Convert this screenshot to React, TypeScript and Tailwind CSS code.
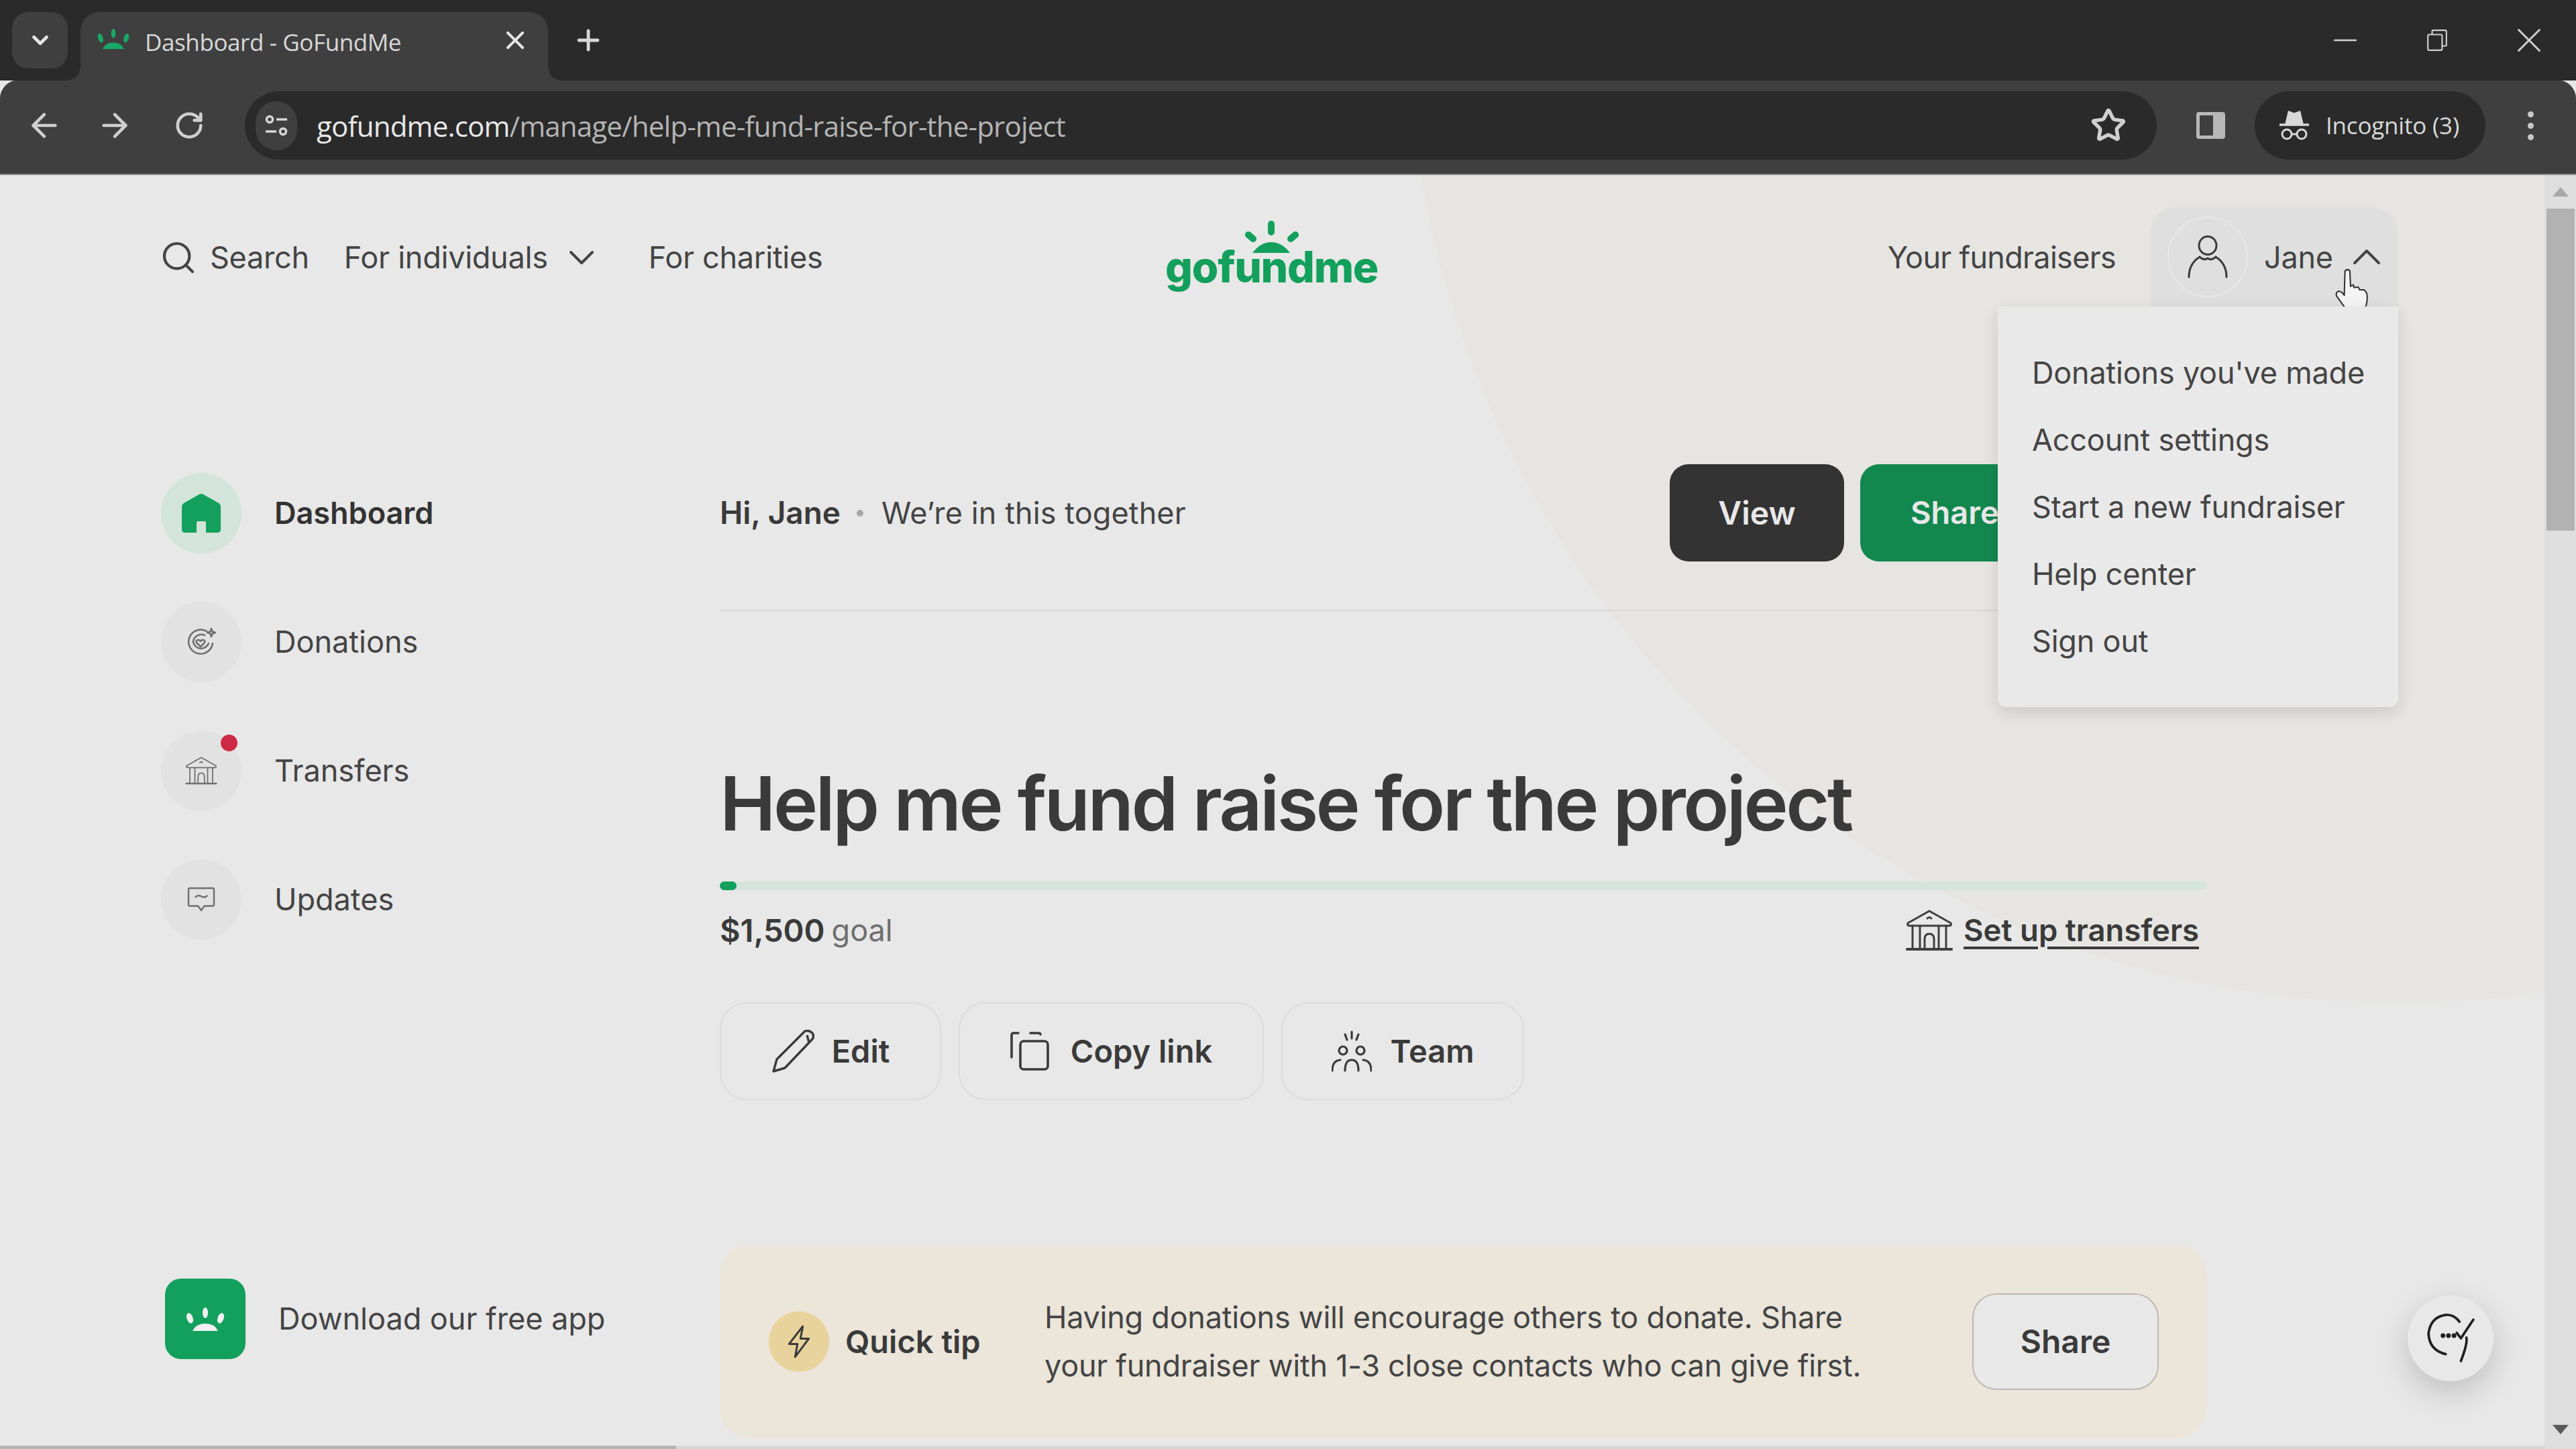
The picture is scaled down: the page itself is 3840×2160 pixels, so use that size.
import React from "react";
import { ChevronDown, ChevronUp, X, Plus, ArrowLeft, ArrowRight, RotateCw, Star, Minus, Search } from "lucide-react";

function Sun({ color, className }: { color: string; className?: string }) {
  return (
    <svg viewBox="0 0 60 35" preserveAspectRatio="none" className={className} fill={color}>
      <ellipse cx="30" cy="8" rx="4" ry="8" />
      <ellipse cx="7" cy="16" rx="4.5" ry="8" transform="rotate(-20 7 16)" />
      <ellipse cx="53" cy="16" rx="4.5" ry="8" transform="rotate(20 53 16)" />
      <path d="M11 35 Q16 24 30 24 Q44 24 49 35 Z" />
    </svg>
  );
}

function Bank({ className, stroke = 2 }: { className?: string; stroke?: number }) {
  return (
    <svg viewBox="0 0 70 62" className={className} fill="none" stroke="currentColor" strokeWidth={stroke} strokeLinecap="round" strokeLinejoin="round">
      <path d="M35 2 L67 20 Q69 23 65 24 L5 24 Q1 23 3 20 Z" />
      <path d="M32 13 Q35 10 38 13" />
      <path d="M10 24 V57 M21 24 V57 M49 24 V57 M60 24 V57" />
      <path d="M28 57 V44 Q28 36 35 36 Q42 36 42 44 V57" />
      <path d="M2 59 H68" strokeWidth={stroke * 1.4} />
    </svg>
  );
}

function NavIcon({ kind }: { kind: string }) {
  if (kind === "home")
    return (
      <svg viewBox="0 0 60 60" className="w-[60px] h-[60px]" fill="#12a05c">
        <path d="M30 1 Q32 1 34 2.5 L56 15 Q59 17 59 21 V54 Q59 59 54 59 H37 V44 Q37 42 35 42 H25 Q23 42 23 44 V59 H6 Q1 59 1 54 V21 Q1 17 4 15 L26 2.5 Q28 1 30 1 Z" />
      </svg>
    );
  if (kind === "target")
    return (
      <svg viewBox="0 0 44 44" className="w-[44px] h-[44px]" fill="none" stroke="#707070" strokeWidth="2.6" strokeLinecap="round" strokeLinejoin="round">
        <path d="M30 6 A18 18 0 1 0 39 24" />
        <path d="M10 22 A12 12 0 0 0 33 24" />
        <path d="M10 22 A12 12 0 0 1 27 12" />
        <path d="M21 29 L15 23 Q13.5 19.5 17 19 Q19.5 18.5 21 21 Q22.5 18.5 25 19 Q28.5 19.5 27 23 Z" />
        <path d="M37 2 L38.5 6.5 L43 8 L38.5 9.5 L37 14 L35.5 9.5 L31 8 L35.5 6.5 Z" />
      </svg>
    );
  if (kind === "bank")
    return <Bank className="w-[48px] h-[42px] text-[#707070]" stroke={2.6} />;
  return (
    <svg viewBox="0 0 44 40" className="w-[42px] h-[38px]" fill="none" stroke="#707070" strokeWidth="2.6" strokeLinecap="round" strokeLinejoin="round">
      <path d="M4 2 H40 Q42 2 42 4 V28 Q42 30 40 30 H27 L22 37 L17 30 H4 Q2 30 2 28 V4 Q2 2 4 2 Z" />
      <path d="M13 16 Q17 12 22 15 Q27 18 31 14" />
    </svg>
  );
}

function NavItem({ icon, label, active, dot }: { icon: string; label: string; active?: boolean; dot?: boolean }) {
  return (
    <div className="flex items-center h-[120px]">
      <div className={`relative flex items-center justify-center w-[120px] h-[120px] rounded-full ${active ? "bg-[#d3e4db]" : "bg-[#e2e2e2]"}`}>
        <NavIcon kind={icon} />
        {dot && <div className="absolute top-[6px] right-[6px] w-[25px] h-[25px] rounded-full bg-[#cc2a45]" />}
      </div>
      <span className={`ml-[49px] text-[45px] ${active ? "font-semibold text-[#333333]" : "text-[#444444]"}`}>{label}</span>
    </div>
  );
}

function OutlineBtn({ children, w }: { children: React.ReactNode; w: string }) {
  return (
    <div className={`flex items-center justify-center h-[146px] rounded-[40px] border-2 border-[#dcdcdc] text-[47px] font-semibold text-[#3a3a3a] ${w}`}>
      {children}
    </div>
  );
}

export default function App() {
  return (
    <div className="flex flex-col w-[3840px] h-[2160px] overflow-hidden bg-[#e8e8e8] font-['Inter',sans-serif] text-[#333333]">
      {/* tab strip */}
      <div className="relative flex items-start h-[120px] pt-[18px] pl-[18px] bg-[#2a2a2a] font-['Open_Sans',sans-serif]">
        <div className="flex items-center justify-center w-[83px] h-[84px] rounded-[24px] bg-[#3f3f3f] text-[#e4e4e4]">
          <ChevronDown size={38} strokeWidth={3} />
        </div>
        <div className="relative flex items-start ml-[19px] pt-[23px] w-[697px] h-[102px] rounded-t-[28px] bg-[#3f3f3f]">
          <Sun color="#1aa866" className="ml-[24px] mt-[2px] w-[50px] h-[30px]" />
          <span className="ml-[22px] text-[35px] leading-[44px] tracking-[-0.4px] text-[#d8d8d8]">Dashboard - GoFundMe</span>
          <X size={44} strokeWidth={2.2} className="absolute left-[626px] top-[20px] text-[#e6e6e6]" />
          <svg viewBox="0 0 24 24" className="absolute left-[-24px] bottom-0 w-[24px] h-[24px]" fill="#3f3f3f"><path d="M24 0 V24 H0 Q24 24 24 0 Z" /></svg>
          <svg viewBox="0 0 24 24" className="absolute right-[-24px] bottom-0 w-[24px] h-[24px]" fill="#3f3f3f"><path d="M0 0 V24 H24 Q0 24 0 0 Z" /></svg>
        </div>
        <Plus size={48} strokeWidth={2.4} className="ml-[36px] mt-[18px] text-[#d8d8d8]" />
        <div className="ml-auto flex items-center h-[84px] pr-[2px] text-[#d0d0d0]">
          <div className="flex items-center justify-center w-[137px]"><Minus size={54} strokeWidth={1.2} /></div>
          <div className="flex items-center justify-center w-[137px]">
            <svg viewBox="0 0 32 32" className="w-[34px] h-[34px]" fill="none" stroke="currentColor" strokeWidth="2"><rect x="3" y="8" width="20" height="22" rx="2" /><path d="M9 8 V3 Q9 2 10 2 H27 Q29 2 29 4 V23 Q29 24 28 24 H23" /></svg>
          </div>
          <div className="flex items-center justify-center w-[137px]"><X size={62} strokeWidth={1.1} /></div>
        </div>
      </div>

      {/* toolbar */}
      <div className="flex items-center h-[142px] pb-[4px] rounded-t-[28px] border-b-2 border-[#8a8a8a] bg-[#3f3f3f] -mt-px font-['Open_Sans',sans-serif]">
        <ArrowLeft size={56} strokeWidth={2} className="ml-[38px] text-[#cfcfcf]" />
        <ArrowRight size={56} strokeWidth={2} className="ml-[49px] text-[#cfcfcf]" />
        <RotateCw size={46} strokeWidth={2.4} className="ml-[60px] text-[#cfcfcf]" />
        <div className="flex items-center ml-[60px] w-[2850px] h-[102px] rounded-full bg-[#2a2a2a]">
          <div className="flex items-center justify-center ml-[16px] w-[62px] h-[73px] rounded-full bg-[#3f3f3f]">
            <svg viewBox="0 0 36 34" className="w-[36px] h-[34px]" fill="none" stroke="#d8d8d8" strokeWidth="3.4"><circle cx="8" cy="8" r="4.5" /><path d="M18 8 H34 M2 26 H18" /><circle cx="28" cy="26" r="4.5" /></svg>
          </div>
          <span className="ml-[29px] text-[42px] tracking-[-0.8px] text-[#e8e8e8]">gofundme.com<span className="text-[#b4b4b4]">/manage/help-me-fund-raise-for-the-project</span></span>
          <Star size={54} strokeWidth={2.4} className="ml-auto mr-[45px] text-[#cfcfcf]" />
        </div>
        <svg viewBox="0 0 45 42" className="ml-[58px] w-[45px] h-[42px]"><rect x="1" y="1" width="43" height="40" rx="4" fill="#b8b8b8" /><rect x="6" y="6" width="20" height="30" fill="#3f3f3f" /></svg>
        <div className="flex items-center ml-[43px] w-[344px] h-[102px] rounded-full bg-[#2a2a2a]">
          <svg viewBox="0 0 46 46" className="ml-[36px] w-[46px] h-[46px]" fill="none" stroke="#d8d8d8" strokeWidth="3"><path d="M15 3 L23 6 L31 3 L35 20 H11 Z" fill="#d8d8d8" /><path d="M1 22 H45" strokeWidth="3.4" /><circle cx="12" cy="36" r="7" /><circle cx="34" cy="36" r="7" /><path d="M19 36 H27" /></svg>
          <span className="ml-[24px] text-[35px] tracking-[-0.2px] text-[#d8d8d8]">Incognito (3)</span>
        </div>
        <div className="flex flex-col gap-[8px] ml-[63px]">
          <div className="w-[9px] h-[9px] rounded-full bg-[#c8c8c8]" />
          <div className="w-[9px] h-[9px] rounded-full bg-[#c8c8c8]" />
          <div className="w-[9px] h-[9px] rounded-full bg-[#c8c8c8]" />
        </div>
      </div>

      {/* viewport */}
      <div className="flex flex-1 min-h-0">
        <div className="relative flex-1 overflow-hidden">
          <div className="absolute left-[2098px] top-[-1722px] w-[2956px] h-[2956px] rounded-full bg-[#e6e5e2]" />

          {/* header */}
          <div className="relative grid grid-cols-[1492px_315px_1fr] items-center h-[148px] mt-[48px] ml-[245px]">
            <div className="flex items-center pt-[2px] text-[45px] tracking-[-0.25px] text-[#444444]">
              <Search size={56} strokeWidth={1.8} className="-ml-[7px]" />
              <span className="ml-[19px]">Search</span>
              <span className="ml-[52px]">For individuals</span>
              <ChevronDown size={64} strokeWidth={1.5} className="ml-[18px]" />
              <span className="ml-[68px]">For charities</span>
            </div>
            <div className="relative h-[112px]">
              <svg viewBox="0 0 85 48" className="absolute top-[2px] left-[116px] w-[85px] h-[48px]" fill="#12a05c" stroke="#12a05c" strokeLinecap="round">
                <path d="M42 5 V17 M8 21 L15 27 M78 21 L71 27" strokeWidth="10" fill="none" />
                <path d="M14 48 Q26 32 42 32 Q58 32 70 48 Z" stroke="none" />
              </svg>
              <span className="absolute left-0 top-[39px] text-[64px] font-extrabold tracking-[-1.2px] leading-none text-[#12a05c]">gofundme</span>
            </div>
            <div className="flex items-center justify-end w-[1522px] text-[45px] tracking-[-0.25px] text-[#444444]">
              <span className="tracking-[-0.7px] pt-[2px]">Your fundraisers</span>
              <div className="relative flex items-center ml-[52px] w-[368px] h-[148px] rounded-t-[36px] bg-[#dfdfdf]">
                <div className="flex items-center justify-center ml-[25px] w-[120px] h-[120px] rounded-full border-2 border-[#e9e9e9]">
                  <svg viewBox="0 0 60 64" className="w-[60px] h-[64px]" fill="none" stroke="#3a3a3a" strokeWidth="3" strokeLinecap="round">
                    <ellipse cx="30" cy="15" rx="13" ry="13.5" />
                    <path d="M2 62 Q2 42 18 32 Q24 38 30 34 Q36 38 42 32 Q58 42 58 62" />
                  </svg>
                </div>
                <span className="ml-[24px] pt-[2px]">Jane</span>
                <ChevronUp size={72} strokeWidth={1.3} className="ml-[14px]" />
                <svg viewBox="0 0 52 64" className="absolute left-[273px] top-[90px] w-[54px] h-[68px]" fill="#f4f4f4" stroke="#333333" strokeWidth="2" strokeLinejoin="round">
                  <path d="M16 4 Q20 0 23 4 L24 26 L28 24 L29 28 L35 27 L37 31 L43 31 Q48 34 48 42 Q48 54 42 62 L20 62 Q14 54 4 40 Q2 35 7 33 Q11 33 15 39 Z" />
                </svg>
              </div>
            </div>

            {/* account menu */}
            <div className="absolute left-[2733px] top-[148px] z-10 flex flex-col justify-center w-[597px] h-[597px] pl-[51px] rounded-b-[12px] bg-[#e9e9e9] shadow-[0_8px_24px_rgba(0,0,0,0.12)] text-[45px] tracking-[-0.2px] text-[#444444]">
              <div className="flex items-center h-[100px]">Donations you've made</div>
              <div className="flex items-center h-[100px]">Account settings</div>
              <div className="flex items-center h-[100px]">Start a new fundraiser</div>
              <div className="flex items-center h-[100px]">Help center</div>
              <div className="flex items-center h-[100px]">Sign out</div>
            </div>
          </div>

          {/* body */}
          <div className="relative flex mt-[235px] ml-[240px]">
            <div className="flex flex-col gap-[72px] w-[833px] pt-[13px]">
              <NavItem icon="home" label="Dashboard" active />
              <NavItem icon="target" label="Donations" />
              <NavItem icon="bank" label="Transfers" dot />
              <NavItem icon="chat" label="Updates" />
              <div className="flex items-center mt-[433px] ml-[6px]">
                <div className="flex items-center justify-center w-[120px] h-[120px] rounded-[24px] bg-[#12a05c]">
                  <Sun color="#f0f0f0" className="w-[60px] h-[35px]" />
                </div>
                <span className="ml-[49px] text-[45px] text-[#444444]">Download our free app</span>
              </div>
            </div>

            <div className="flex flex-col w-[2216px]">
              <div className="flex items-center h-[145px]">
                <span className="text-[46px] font-semibold text-[#3a3a3a]">Hi, Jane</span>
                <span className="ml-[24px] w-[10px] h-[10px] rounded-full bg-[#a8a8a8]" />
                <span className="ml-[27px] text-[45px] tracking-[0.1px] text-[#444444]">We’re in this together</span>
                <div className="flex items-center justify-center ml-auto w-[260px] h-[145px] rounded-[28px] bg-[#333333] text-[48px] font-semibold text-[#e8e8e8]">View</div>
                <div className="flex items-center pl-[75px] ml-[24px] mr-[193px] w-[323px] h-[145px] rounded-[28px] bg-[#12884f] text-[47px] font-semibold text-[#e8e8e8]">Share</div>
              </div>
              <div className="mt-[72px] h-[2px] bg-[#d8d8d8]" />
              <h1 className="mt-[211px] text-[112px] leading-[150px] font-semibold tracking-[-3.6px] text-[#3a3a3a]">Help me fund raise for the project</h1>
              <div className="relative mt-[42px] h-[13px] rounded-full bg-[#d5e5dd]">
                <div className="absolute left-0 top-0 w-[25px] h-[13px] rounded-full bg-[#12a05c]" />
              </div>
              <div className="flex items-center mt-[30px] h-[60px]">
                <span className="text-[47px] font-semibold text-[#3a3a3a]">$1,500</span>
                <span className="ml-[10px] text-[45px] text-[#6e6e6e]">goal</span>
                <Bank className="ml-auto w-[70px] h-[62px] text-[#3f3f3f]" stroke={3} />
                <span className="ml-[16px] mr-[11px] text-[45.5px] font-semibold underline underline-offset-[8px] decoration-[4px] text-[#3a3a3a]">Set up transfers</span>
              </div>
              <div className="flex mt-[77px] gap-[26px]">
                <OutlineBtn w="w-[330px]">
                  <svg viewBox="0 0 64 64" className="w-[64px] h-[64px] mr-[26px]" fill="none" stroke="#3a3a3a" strokeWidth="3.4" strokeLinejoin="round"><path d="M50 2 Q56 0 61 5 Q64 10 61 14 L20 57 L3 62 L8 44 Z" /><path d="M53 8 L56 19" /></svg>
                  Edit
                </OutlineBtn>
                <OutlineBtn w="w-[455px]">
                  <svg viewBox="0 0 58 58" className="w-[58px] h-[58px] mr-[32px]" fill="none" stroke="#3a3a3a" strokeWidth="3.6" strokeLinecap="round"><path d="M2 38 V5 Q2 2 5 2 H12 M30 2 H42 Q45 2 45 4" /><rect x="15" y="14" width="41" height="42" rx="5" /></svg>
                  Copy link
                </OutlineBtn>
                <OutlineBtn w="w-[362px]">
                  <svg viewBox="0 0 60 62" className="w-[60px] h-[62px] mr-[28px]" fill="none" stroke="#3a3a3a" strokeWidth="3.2" strokeLinecap="round"><path d="M30 2 V12 M20 6 L23 14 M40 6 L37 14" /><circle cx="17" cy="30" r="6" /><circle cx="43" cy="30" r="6" /><path d="M1 60 Q1 45 13 44 M20 60 Q20 44 30 44 Q40 44 40 60 M59 60 Q59 45 47 44" /></svg>
                  Team
                </OutlineBtn>
              </div>
              <div className="flex items-center mt-[216px] h-[288px] rounded-[44px] bg-[#ebe5da]">
                <div className="flex items-center justify-center ml-[73px] w-[90px] h-[90px] rounded-full bg-[#e8d39c]">
                  <svg viewBox="0 0 30 44" className="w-[36px] h-[50px]" fill="none" stroke="#3a3a3a" strokeWidth="2.6" strokeLinejoin="round"><path d="M20 2 L2 25 H13 L10 42 L28 18 H17 Z" /></svg>
                </div>
                <span className="ml-[24px] w-[297px] text-[47px] font-semibold text-[#3a3a3a]">Quick tip</span>
                <p className="w-[1260px] text-[45px] tracking-[-0.25px] leading-[72px] text-[#444444]">Having donations will encourage others to donate. Share your fundraiser with 1-3 close contacts who can give first.</p>
                <div className="flex items-center justify-center ml-auto mr-[71px] w-[278px] h-[144px] rounded-[36px] border-2 border-[#bdb9b2] bg-[#e8e8e8] text-[48px] font-semibold text-[#3a3a3a]">Share</div>
              </div>
            </div>
          </div>

          {/* help fab */}
          <div className="absolute left-[3589px] top-[1670px] flex items-center justify-center w-[128px] h-[128px] rounded-full bg-[#e8e8e8] shadow-[0_16px_48px_rgba(0,0,0,0.18)]">
            <svg viewBox="0 0 70 74" className="w-[72px] h-[76px]" fill="none" stroke="#1f1f1f" strokeWidth="3.6" strokeLinecap="round" strokeLinejoin="round">
              <path d="M48 13 Q40 2 28 3 Q6 6 3 30 Q4 54 28 60" />
              <path d="M44 29 L50 37 L68 10" />
              <path d="M58 36 Q60 44 50 70" />
              <circle cx="24" cy="33" r="1.6" fill="#1f1f1f" /><circle cx="32" cy="33" r="1.6" fill="#1f1f1f" /><circle cx="40" cy="33" r="1.6" fill="#1f1f1f" />
            </svg>
          </div>

          {/* bottom scrollbar */}
          <div className="absolute left-0 bottom-0 w-full h-[5px] bg-[#d8d8d8]">
            <div className="w-[1008px] h-full bg-[#b4b4b4]" />
          </div>
        </div>

        {/* scrollbar */}
        <div className="flex flex-col items-center w-[47px] bg-[#dedede]">
          <div className="mt-[18px] w-0 h-0 border-x-[12px] border-x-transparent border-b-[14px] border-b-[#a8a8a8]" />
          <div className="mt-[18px] w-[42px] h-[480px] bg-[#b2b2b2]" />
          <div className="mt-auto mb-[22px] w-0 h-0 border-x-[12px] border-x-transparent border-t-[14px] border-t-[#5a5a5a]" />
        </div>
      </div>
    </div>
  );
}
